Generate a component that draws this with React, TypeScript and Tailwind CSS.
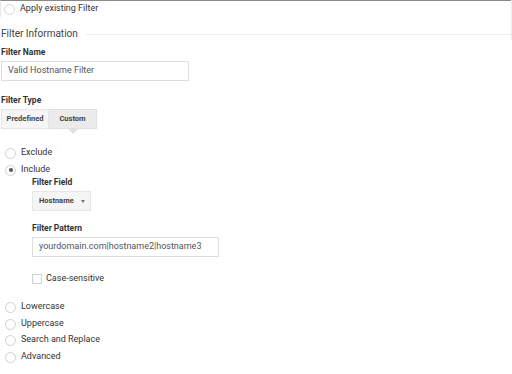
function Radio({ label, checked = false, className = "" }: { label: string; checked?: boolean; className?: string }) {
  return (
    <div className={`flex h-[14px] items-center ${className}`}>
      <span className="ml-[5px] flex h-[11px] w-[11px] items-center justify-center rounded-full border border-[#d0d0d0] bg-white">
        {checked && <span className="h-[4px] w-[4px] rounded-full bg-[#555]" />}
      </span>
      <span className="ml-[5px] text-[9px] text-[#333]">{label}</span>
    </div>
  );
}

function Label({ children, className = "" }: { children: string; className?: string }) {
  return (
    <div className={`flex h-[12px] items-center text-[8.5px] font-bold text-[#333] ${className}`}>
      {children}
    </div>
  );
}

export default function App() {
  return (
    <div className="h-[374px] w-[512px] overflow-hidden bg-white font-['Roboto',sans-serif]">
      <div className="border-r border-[#eee]">
        {/* Existing filter */}
        <div className="flex h-[17px] items-center border-l border-t border-l-[#e6e6e6] border-t-[#8a8a8a]">
          <span className="ml-[3px] h-[11px] w-[11px] rounded-full border border-[#d6d6d6]" />
          <span className="ml-[5px] text-[9px] text-[#333]">Apply existing Filter</span>
        </div>

        <div className="mt-[9px] flex h-[14px] items-center pl-px">
          <span className="text-[10px] text-[#444]">Filter Information</span>
          <span className="ml-[8px] mt-[2px] h-px flex-1 bg-[#ececec]" />
        </div>
      </div>

      <div className="pl-px">
        <Label className="mt-[6px]">Filter Name</Label>
        <div className="mt-[3px] flex h-[20px] w-[188px] items-center border border-[#dedede] px-[6px] text-[9px] text-[#555]">
          Valid Hostname Filter
        </div>

        <Label className="mt-[13px]">Filter Type</Label>
        <div className="mt-[3px] flex h-[20px]">
          <div className="flex w-[48px] items-center justify-center border border-[#e6e6e6] bg-[#f5f5f5] text-[7.5px] font-bold text-[#444]">
            Predefined
          </div>
          <div className="relative flex w-[48px] items-center justify-center border border-l-0 border-[#e0e0e0] bg-[#ebebeb] text-[7.5px] font-bold text-[#444]">
            Custom
            <span className="absolute left-[19px] top-[19px] h-0 w-0 border-x-[5px] border-t-[5px] border-x-transparent border-t-[#e0e0e0]" />
          </div>
        </div>
      </div>

      <Radio label="Exclude" className="mt-[17px]" />
      <Radio label="Include" checked className="mt-[3px]" />

      <div className="-mt-[1px] ml-[32px]">
        <Label>Filter Field</Label>
        <div className="mt-[3px] flex h-[20px] w-[59px] items-center border border-[#e6e6e6] bg-[#f5f5f5] pl-[6px] text-[7.5px] font-bold text-[#444]">
          Hostname
          <span className="ml-auto mr-[5px] h-0 w-0 border-x-[2.5px] border-t-[3px] border-x-transparent border-t-[#777]" />
        </div>

        <Label className="mt-[11px]">Filter Pattern</Label>
        <div className="mt-[3px] flex h-[20px] w-[187px] items-center border border-[#dedede] px-[6px] text-[9px] text-[#555]">
          yourdomain.com|hostname2|hostname3
        </div>

        <div className="mt-[15px] flex h-[14px] items-center">
          <span className="h-[10px] w-[10px] border border-[#d0d0d0]" />
          <span className="ml-[4px] text-[9px] text-[#333]">Case-sensitive</span>
        </div>
      </div>

      <Radio label="Lowercase" className="mt-[14px]" />
      <Radio label="Uppercase" className="mt-[3px]" />
      <Radio label="Search and Replace" className="mt-[2px]" />
      <Radio label="Advanced" className="mt-[3px]" />
    </div>
  );
}
